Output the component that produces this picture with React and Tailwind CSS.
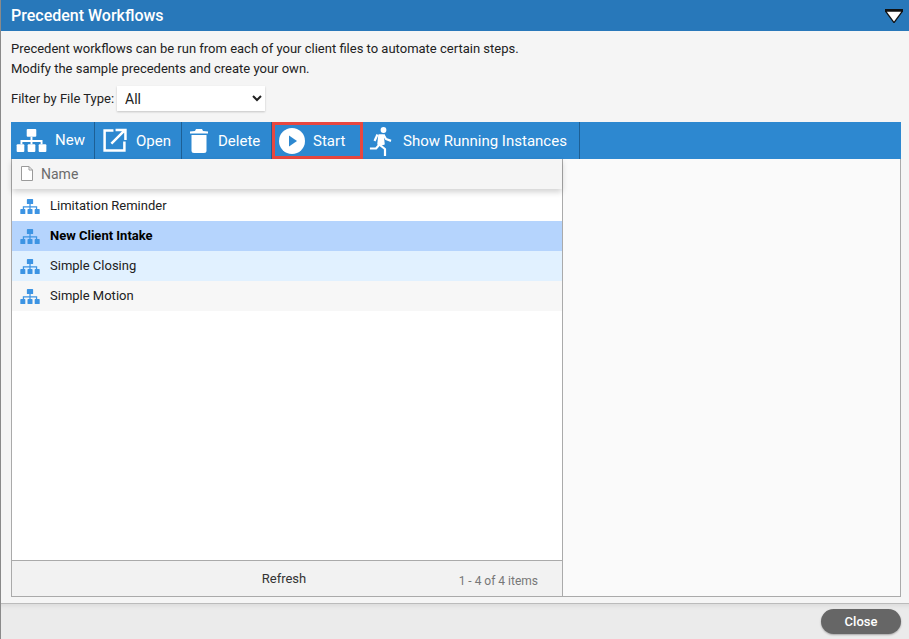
import React from 'react';

const rows = [
    { name: 'Limitation Reminder', cls: 'bg-white' },
    { name: 'New Client Intake', cls: 'bg-[#b5d4fd] font-bold text-black' },
    { name: 'Simple Closing', cls: 'bg-[#e1f1ff]' },
    { name: 'Simple Motion', cls: 'bg-[#f7f7f7]' },
];

function OrgIcon({ className, fill }) {
    return (
        <svg viewBox="0 0 32 24" className={className} fill={fill}>
            <rect x="11" y="0" width="10" height="8" rx="1" />
            <rect x="0.5" y="16" width="8" height="8" rx="1" />
            <rect x="12" y="16" width="8" height="8" rx="1" />
            <rect x="23.5" y="16" width="8" height="8" rx="1" />
            <path d="M15 8h2v3.500h10.500v4.500h-2v-2.500h-8.500v2.500h-2v-2.500h-8.500v2.500h-2v-4.500h10.500z" />
        </svg>
    );
}

function ToolButton({ children, className }) {
    return (
        <button className={`h-full flex items-center shrink-0 text-white text-[15px] ${className}`}>
            {children}
        </button>
    );
}

export default function App() {
    return (
        <div className="w-[909px] h-[639px] overflow-hidden flex flex-col bg-[#f5f5f5] border-l border-l-[#8a8a8a] font-['Roboto',sans-serif] text-[13px] text-[#222]">
            <div className="h-[31px] shrink-0 bg-[#2878ba] flex items-center justify-between pl-[10px] pr-[6px]">
                <h1 className="text-white text-[16px] font-medium">Precedent Workflows</h1>
                <svg viewBox="0 0 18 14" className="w-[18px] h-[14px] mt-[1px]">
                    <path d="M0 0h18v2.500l-8.500 11.500h-1l-8.500-11.500z" fill="#111" />
                    <path d="M1.800 2.700h14.400l-7.200 9.800z" fill="#fff" />
                </svg>
            </div>

            <div className="flex-1 min-h-0 flex flex-col pl-[10px] pr-[8px] pt-[8px]">
                <p className="leading-[20px] h-[20px]">Precedent workflows can be run from each of your client files to automate certain steps.</p>
                <p className="leading-[20px] h-[20px]">Modify the sample precedents and create your own.</p>

                <div className="flex items-center mt-[7px] h-[25px]">
                    <span className="mr-[3px]">Filter by File Type:</span>
                    <select className="w-[148px] h-[25px] bg-white pl-[4px] text-[14px] text-[#222] shadow-[0_1px_2px_rgba(0,0,0,0.2)] outline-none">
                        <option>All</option>
                    </select>
                </div>

                <div className="mt-[11px] h-[37px] shrink-0 bg-[#2d88d0] flex items-center">
                    <ToolButton className="w-[84px] pl-[5px] border-r border-r-[#1d5f94]">
                        <OrgIcon className="w-[31px] h-[23px]" fill="#fff" />
                        <span className="ml-[8px]">New</span>
                    </ToolButton>
                    <ToolButton className="w-[87px] pl-[7px] border-r border-r-[#1d5f94]">
                        <svg viewBox="0 0 24 24" className="w-[25px] h-[25px]" fill="none" stroke="#fff" strokeWidth="2.400">
                            <path d="M11 2.500h-8.500v19h19v-8.500" />
                            <path d="M9 15l12-12M13 2h9.500v9.500" />
                        </svg>
                        <span className="ml-[9px] mt-[2px]">Open</span>
                    </ToolButton>
                    <ToolButton className="w-[90px] pl-[8px] border-r border-r-[#1d5f94]">
                        <svg viewBox="0 0 18 24" className="w-[18px] h-[24px]" fill="#fff">
                            <path d="M0 2.500l5-.5 1-2h6l1 2 5 .5v2h-18z" />
                            <path d="M1.500 6h15v15.500a2.500 2.500 0 0 1-2.500 2.500h-10a2.500 2.500 0 0 1-2.500-2.500z" />
                        </svg>
                        <span className="ml-[10px] mt-[2px]">Delete</span>
                    </ToolButton>
                    <ToolButton className="w-[91px] h-[35px] pl-[4px] border-[3px] border-[#e8473f]">
                        <svg viewBox="0 0 26 26" className="w-[26px] h-[26px]">
                            <circle cx="13" cy="13" r="13" fill="#fff" />
                            <path d="M10 7.500l8 5.500-8 5.500z" fill="#2d88d0" />
                        </svg>
                        <span className="ml-[8px] mt-[2px]">Start</span>
                    </ToolButton>
                    <ToolButton className="w-[217px] pl-[1px] border-r border-r-[#1d5f94]">
                        <svg viewBox="0 0 32 32" className="w-[32px] h-[32px]" fill="none" stroke="#fff" strokeWidth="2.200" strokeLinejoin="round" strokeLinecap="square">
                            <circle cx="19.500" cy="5" r="2.900" fill="#fff" stroke="none" />
                            <path d="M15 10l4 0 1 9-4 1-2-1z" fill="#fff" strokeWidth="1.500" />
                            <path d="M13 10.500l-2 4.500" />
                            <path d="M20 10.500l2 3.500 4 1.500" />
                            <path d="M15 20l-3 3.500h-5" />
                            <path d="M16 20l5 4v6" />
                        </svg>
                        <span className="ml-[7px] mt-[2px]">Show Running Instances</span>
                    </ToolButton>
                </div>

                <div className="h-[438px] shrink-0 flex border-x border-b border-[#aaaaaa]">
                    <div className="w-[551px] shrink-0 flex flex-col border-r border-r-[#aaaaaa] bg-white">
                        <div className="h-[30px] shrink-0 bg-[#f5f5f5] flex items-center pl-[9px] text-[14px] text-[#6b6b6b] shadow-[0_3px_6px_rgba(0,0,0,0.18)] relative">
                            <svg viewBox="0 0 12 15" className="w-[12px] h-[15px] mb-[2px]" fill="#fff" stroke="#9a9a9a">
                                <path d="M.500.500h7.500l3.500 3.500v10.500h-11z" />
                                <path d="M8 .500v3.500h3.500" fill="none" />
                            </svg>
                            <span className="ml-[8px]">Name</span>
                        </div>
                        <div className="flex-1 pt-[2px]">
                            {rows.map((r) => (
                                <div key={r.name} className={`h-[30px] flex items-center pl-[8px] ${r.cls}`}>
                                    <OrgIcon className="w-[20px] h-[15px]" fill="#3d94e3" />
                                    <span className="ml-[10px]">{r.name}</span>
                                </div>
                            ))}
                        </div>
                        <div className="h-[36px] shrink-0 bg-[#f2f2f2] border-t border-t-[#aaaaaa] flex items-center pr-[6px] relative">
                            <span className="w-full text-center text-[#333]">Refresh</span>
                            <span className="absolute right-[24px] top-[11px] text-[12px] text-[#777]">1 - 4 of 4 items</span>
                        </div>
                    </div>
                    <div className="flex-1 bg-[#fafafa]"></div>
                </div>
            </div>

            <div className="h-[36px] shrink-0 bg-[#ebebeb] border-t border-t-[#bbbbbb] flex items-center justify-end pr-[8px] shadow-[inset_0_6px_6px_-6px_rgba(0,0,0,0.12)]">
                <button className="w-[80px] h-[25px] rounded-full bg-[#666666] text-white text-[13px] font-medium shadow-[0_1px_2px_rgba(0,0,0,0.3)]">Close</button>
            </div>
        </div>
    );
}
